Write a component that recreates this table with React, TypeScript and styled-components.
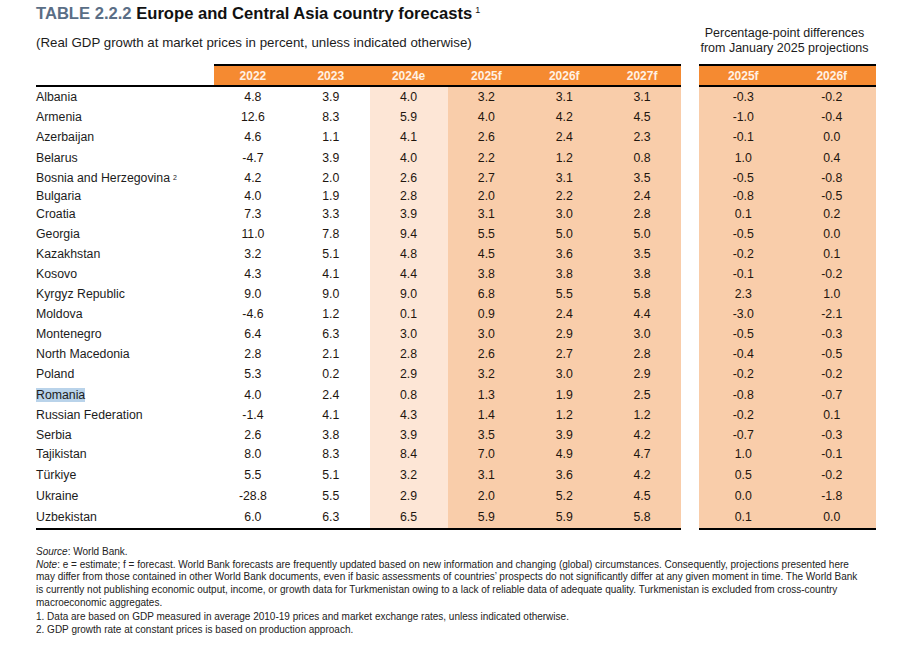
import React from "react";
import styled, { createGlobalStyle } from "styled-components";

const Global = createGlobalStyle`
  html, body { margin: 0; padding: 0; background: #ffffff; }
  body { font-family: "Liberation Sans", Arial, Helvetica, sans-serif; color: #1f1a16; }
`;

const Page = styled.div`
  width: 897px;
  height: 646px;
  box-sizing: border-box;
  padding-left: 36px;
  overflow: hidden;
`;

const TopArea = styled.div`
  display: grid;
  grid-template-columns: 645px 177px;
  column-gap: 18px;
  height: 64px;
`;

const TitleBlock = styled.div`
  display: flex;
  flex-direction: column;
`;

const Title = styled.div`
  margin-top: 5px;
  font-size: 16.6px;
  line-height: 18px;
  font-weight: 700;
  color: #111;
  white-space: nowrap;
`;

const TableLabel = styled.span`
  color: #5a6e86;
`;

const TitleSup = styled.sup`
  font-size: 9px;
  font-weight: 400;
  vertical-align: 6px;
  line-height: 0;
  margin-left: 3px;
`;

const Subtitle = styled.div`
  margin-top: 12px;
  font-size: 13.3px;
  line-height: 16px;
  color: #1c1c1c;
  white-space: nowrap;
`;

const DiffHeading = styled.div`
  margin-top: 26px;
  padding-right: 6px;
  font-size: 12.5px;
  line-height: 15px;
  text-align: center;
  color: #1c1c1c;
  white-space: nowrap;
`;

const TablesRow = styled.div`
  display: flex;
  gap: 18px;
  align-items: flex-start;
`;

const Table = styled.div<{ $width: number }>`
  width: ${(p) => p.$width}px;
  display: flex;
  flex-direction: column;
  border-bottom: 2px solid #000;
`;

const HeadRow = styled.div<{ $cols: string }>`
  display: grid;
  grid-template-columns: ${(p) => p.$cols};
  border-bottom: 2px solid #000;
`;

const HeadCell = styled.div<{ $blank?: boolean }>`
  height: 19px;
  border-top: 2px solid ${(p) => (p.$blank ? "transparent" : "#000")};
  background: ${(p) => (p.$blank ? "transparent" : "#f58a31")};
  color: #fff1e4;
  font-size: 12px;
  font-weight: 700;
  display: flex;
  align-items: center;
  justify-content: center;
`;

const BodyRow = styled.div<{ $cols: string; $h: number }>`
  display: grid;
  grid-template-columns: ${(p) => p.$cols};
  height: ${(p) => p.$h}px;
`;

type Tone = "white" | "light" | "peach";

const toneColor: Record<Tone, string> = {
  white: "transparent",
  light: "#fde6d6",
  peach: "#f9cdaa",
};

const NumCell = styled.div<{ $tone: Tone }>`
  background: ${(p) => toneColor[p.$tone]};
  display: flex;
  align-items: center;
  justify-content: center;
  font-size: 12.3px;
  color: #1f160f;
`;

const NameCell = styled.div`
  display: flex;
  align-items: center;
  font-size: 12.3px;
  color: #1c1c1c;
  white-space: nowrap;
`;

const Selected = styled.span`
  background: #b9d3ea;
`;

const NameSup = styled.sup`
  font-size: 7px;
  line-height: 0;
  vertical-align: 5px;
  margin-left: 3px;
`;

const Notes = styled.div`
  margin-top: 16px;
  font-size: 10px;
  line-height: 12.7px;
  color: #222;
`;

const NoteLine = styled.div<{ $gap?: number }>`
  white-space: nowrap;
  margin-top: ${(p) => p.$gap ?? 0}px;
`;

type Row = {
  name: string;
  sup?: string;
  sel?: boolean;
  h: number;
  v: string[];
  d: string[];
};

const rows: Row[] = [
  { name: "Albania", h: 20, v: ["4.8", "3.9", "4.0", "3.2", "3.1", "3.1"], d: ["-0.3", "-0.2"] },
  { name: "Armenia", h: 20, v: ["12.6", "8.3", "5.9", "4.0", "4.2", "4.5"], d: ["-1.0", "-0.4"] },
  { name: "Azerbaijan", h: 20, v: ["4.6", "1.1", "4.1", "2.6", "2.4", "2.3"], d: ["-0.1", "0.0"] },
  { name: "Belarus", h: 21, v: ["-4.7", "3.9", "4.0", "2.2", "1.2", "0.8"], d: ["1.0", "0.4"] },
  { name: "Bosnia and Herzegovina", sup: "2", h: 19, v: ["4.2", "2.0", "2.6", "2.7", "3.1", "3.5"], d: ["-0.5", "-0.8"] },
  { name: "Bulgaria", h: 17, v: ["4.0", "1.9", "2.8", "2.0", "2.2", "2.4"], d: ["-0.8", "-0.5"] },
  { name: "Croatia", h: 20, v: ["7.3", "3.3", "3.9", "3.1", "3.0", "2.8"], d: ["0.1", "0.2"] },
  { name: "Georgia", h: 20, v: ["11.0", "7.8", "9.4", "5.5", "5.0", "5.0"], d: ["-0.5", "0.0"] },
  { name: "Kazakhstan", h: 20, v: ["3.2", "5.1", "4.8", "4.5", "3.6", "3.5"], d: ["-0.2", "0.1"] },
  { name: "Kosovo", h: 20, v: ["4.3", "4.1", "4.4", "3.8", "3.8", "3.8"], d: ["-0.1", "-0.2"] },
  { name: "Kyrgyz Republic", h: 20, v: ["9.0", "9.0", "9.0", "6.8", "5.5", "5.8"], d: ["2.3", "1.0"] },
  { name: "Moldova", h: 20, v: ["-4.6", "1.2", "0.1", "0.9", "2.4", "4.4"], d: ["-3.0", "-2.1"] },
  { name: "Montenegro", h: 20, v: ["6.4", "6.3", "3.0", "3.0", "2.9", "3.0"], d: ["-0.5", "-0.3"] },
  { name: "North Macedonia", h: 20, v: ["2.8", "2.1", "2.8", "2.6", "2.7", "2.8"], d: ["-0.4", "-0.5"] },
  { name: "Poland", h: 20, v: ["5.3", "0.2", "2.9", "3.2", "3.0", "2.9"], d: ["-0.2", "-0.2"] },
  { name: "Romania", sel: true, h: 21, v: ["4.0", "2.4", "0.8", "1.3", "1.9", "2.5"], d: ["-0.8", "-0.7"] },
  { name: "Russian Federation", h: 20, v: ["-1.4", "4.1", "4.3", "1.4", "1.2", "1.2"], d: ["-0.2", "0.1"] },
  { name: "Serbia", h: 19, v: ["2.6", "3.8", "3.9", "3.5", "3.9", "4.2"], d: ["-0.7", "-0.3"] },
  { name: "Tajikistan", h: 20, v: ["8.0", "8.3", "8.4", "7.0", "4.9", "4.7"], d: ["1.0", "-0.1"] },
  { name: "Türkiye", h: 21, v: ["5.5", "5.1", "3.2", "3.1", "3.6", "4.2"], d: ["0.5", "-0.2"] },
  { name: "Ukraine", h: 21, v: ["-28.8", "5.5", "2.9", "2.0", "5.2", "4.5"], d: ["0.0", "-1.8"] },
  { name: "Uzbekistan", h: 22, v: ["6.0", "6.3", "6.5", "5.9", "5.9", "5.8"], d: ["0.1", "0.0"] },
];

const mainCols = "178px repeat(6, 1fr)";
const diffCols = "1fr 1fr";
const mainYears = ["2022", "2023", "2024e", "2025f", "2026f", "2027f"];
const mainTones: Tone[] = ["white", "white", "light", "peach", "peach", "peach"];

export default function App() {
  return (
    <>
      <Global />
      <Page>
        <TopArea>
          <TitleBlock>
            <Title>
              <TableLabel>TABLE 2.2.2</TableLabel> Europe and Central Asia country forecasts
              <TitleSup>1</TitleSup>
            </Title>
            <Subtitle>(Real GDP growth at market prices in percent, unless indicated otherwise)</Subtitle>
          </TitleBlock>
          <DiffHeading>
            Percentage-point differences
            <br />
            from January 2025 projections
          </DiffHeading>
        </TopArea>
        <TablesRow>
          <Table $width={645}>
            <HeadRow $cols={mainCols}>
              <HeadCell $blank />
              {mainYears.map((y) => (
                <HeadCell key={y}>{y}</HeadCell>
              ))}
            </HeadRow>
            {rows.map((r) => (
              <BodyRow key={r.name} $cols={mainCols} $h={r.h}>
                <NameCell>
                  {r.sel ? <Selected>{r.name}</Selected> : r.name}
                  {r.sup && <NameSup>{r.sup}</NameSup>}
                </NameCell>
                {r.v.map((val, i) => (
                  <NumCell key={i} $tone={mainTones[i]}>
                    {val}
                  </NumCell>
                ))}
              </BodyRow>
            ))}
          </Table>
          <Table $width={177}>
            <HeadRow $cols={diffCols}>
              <HeadCell>2025f</HeadCell>
              <HeadCell>2026f</HeadCell>
            </HeadRow>
            {rows.map((r) => (
              <BodyRow key={r.name} $cols={diffCols} $h={r.h}>
                {r.d.map((val, i) => (
                  <NumCell key={i} $tone="peach">
                    {val}
                  </NumCell>
                ))}
              </BodyRow>
            ))}
          </Table>
        </TablesRow>
        <Notes>
          <NoteLine>
            <i>Source</i>: World Bank.
          </NoteLine>
          <NoteLine>
            <i>Note</i>: e = estimate; f = forecast. World Bank forecasts are frequently updated based on new information and changing (global) circumstances. Consequently, projections presented here
          </NoteLine>
          <NoteLine>
            may differ from those contained in other World Bank documents, even if basic assessments of countries’ prospects do not significantly differ at any given moment in time. The World Bank
          </NoteLine>
          <NoteLine>
            is currently not publishing economic output, income, or growth data for Turkmenistan owing to a lack of reliable data of adequate quality. Turkmenistan is excluded from cross-country
          </NoteLine>
          <NoteLine>macroeconomic aggregates.</NoteLine>
          <NoteLine $gap={1.5}>
            1. Data are based on GDP measured in average 2010-19 prices and market exchange rates, unless indicated otherwise.
          </NoteLine>
          <NoteLine>2. GDP growth rate at constant prices is based on production approach.</NoteLine>
        </Notes>
      </Page>
    </>
  );
}
